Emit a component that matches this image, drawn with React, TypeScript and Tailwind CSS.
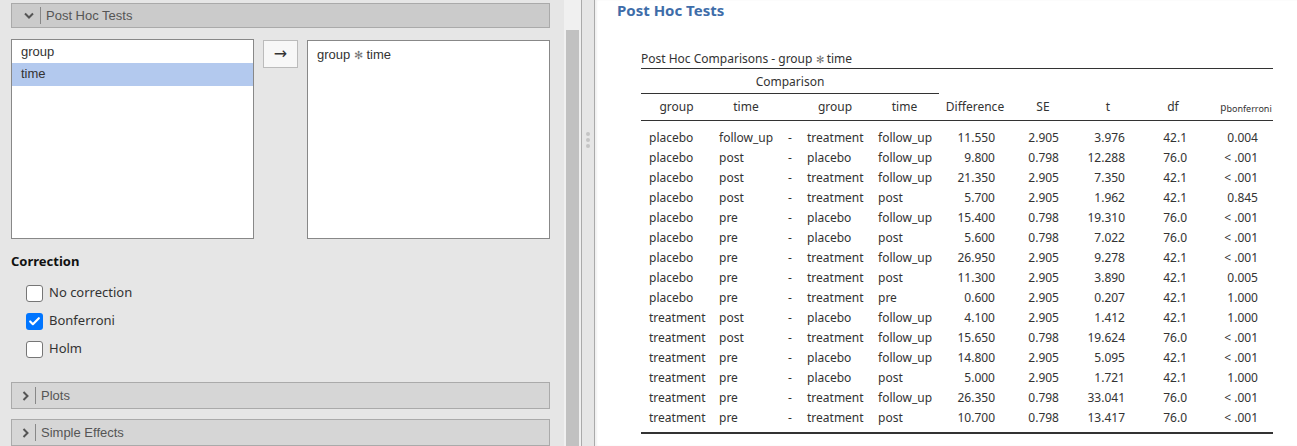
import { Check } from 'lucide-react'

const rows: string[][] = [
  ['placebo', 'follow_up', 'treatment', 'follow_up', '11.550', '2.905', '3.976', '42.1', '0.004'],
  ['placebo', 'post', 'placebo', 'follow_up', '9.800', '0.798', '12.288', '76.0', '< .001'],
  ['placebo', 'post', 'treatment', 'follow_up', '21.350', '2.905', '7.350', '42.1', '< .001'],
  ['placebo', 'post', 'treatment', 'post', '5.700', '2.905', '1.962', '42.1', '0.845'],
  ['placebo', 'pre', 'placebo', 'follow_up', '15.400', '0.798', '19.310', '76.0', '< .001'],
  ['placebo', 'pre', 'placebo', 'post', '5.600', '0.798', '7.022', '76.0', '< .001'],
  ['placebo', 'pre', 'treatment', 'follow_up', '26.950', '2.905', '9.278', '42.1', '< .001'],
  ['placebo', 'pre', 'treatment', 'post', '11.300', '2.905', '3.890', '42.1', '0.005'],
  ['placebo', 'pre', 'treatment', 'pre', '0.600', '2.905', '0.207', '42.1', '1.000'],
  ['treatment', 'post', 'placebo', 'follow_up', '4.100', '2.905', '1.412', '42.1', '1.000'],
  ['treatment', 'post', 'treatment', 'follow_up', '15.650', '0.798', '19.624', '76.0', '< .001'],
  ['treatment', 'pre', 'placebo', 'follow_up', '14.800', '2.905', '5.095', '42.1', '< .001'],
  ['treatment', 'pre', 'placebo', 'post', '5.000', '2.905', '1.721', '42.1', '1.000'],
  ['treatment', 'pre', 'treatment', 'follow_up', '26.350', '0.798', '33.041', '76.0', '< .001'],
  ['treatment', 'pre', 'treatment', 'post', '10.700', '0.798', '13.417', '76.0', '< .001'],
]

const gridCols = 'grid grid-cols-[71px_68px_20px_70px_69px_72px_64px_66px_64px_68px]'

function SectionHeader({ title, open }: { title: string; open?: boolean }) {
  return (
    <div
      className={`flex items-center h-[27px] w-[539px] border border-[#aaaaaa] ${
        open ? 'bg-[#cbcbcb]' : 'bg-[#d6d6d6]'
      }`}
    >
      <div className="w-[28px] flex justify-center pl-[6px]">
        {open ? (
          <svg width="10" height="7" viewBox="0 0 10 7">
            <path d="M1 1.5 L5 5.5 L9 1.5" stroke="#555" strokeWidth="2" fill="none" />
          </svg>
        ) : (
          <svg width="7" height="10" viewBox="0 0 7 10" className="-ml-[8px]">
            <path d="M1.5 1 L5.5 5 L1.5 9" stroke="#555" strokeWidth="2" fill="none" />
          </svg>
        )}
      </div>
      <div className={`h-[17px] w-px bg-[#888] ${open ? 'ml-[0px]' : '-ml-[5px]'}`} />
      <span className="ml-[5px] text-[13px] text-[#555] font-['Liberation_Sans',Arial,sans-serif]">
        {title}
      </span>
    </div>
  )
}

function CheckItem({ label, checked }: { label: string; checked?: boolean }) {
  return (
    <div className="flex items-center h-[28px] pl-[15px]">
      {checked ? (
        <div className="w-[17px] h-[17px] rounded-[3px] bg-[#0075ff] flex items-center justify-center">
          <Check size={13} color="white" strokeWidth={4} />
        </div>
      ) : (
        <div className="w-[17px] h-[17px] rounded-[3px] border border-[#767676] bg-white" />
      )}
      <span className="ml-[6px] text-[13px] text-[#333]">{label}</span>
    </div>
  )
}

// interaction symbol, kept as a text glyph
function Star({ className }: { className: string }) {
  return <span className={`font-['DejaVu_Sans',sans-serif] font-extralight text-[#777] ${className}`}>✻</span>
}

export default function App() {
  return (
    <div className="flex h-[446px] w-[1297px] overflow-hidden font-['Noto_Sans','Open_Sans',sans-serif]">
      {/* Options panel */}
      <div className="w-[564px] bg-[#e6e6e6] pl-[11px] pt-[3px] flex flex-col">
        <SectionHeader title="Post Hoc Tests" open />
        <div className="flex mt-[11px] font-['Liberation_Sans',Arial,sans-serif] text-[13px] text-[#333]">
          <div className="w-[243px] h-[200px] bg-white border border-[#888] pt-[1px]">
            <div className="h-[22px] flex items-center pl-[9px]">group</div>
            <div className="h-[23px] flex items-center pl-[9px] bg-[#b3c9ee]">time</div>
          </div>
          <div className="ml-[9px] mt-[1px] w-[35px] h-[28px] bg-[#f7f7f7] border border-[#bbb] flex items-center justify-center text-[16px] text-[#333] font-['DejaVu_Sans',sans-serif]">
            →
          </div>
          <div className="ml-[9px] mt-[1px] w-[243px] h-[199px] bg-white border border-[#888] pl-[9px] pt-[4px]">
            group <Star className="text-[11px]" /> time
          </div>
        </div>
        <div className="mt-[13px] text-[13px] font-bold text-[#111]">Correction</div>
        <div className="mt-[8px] flex flex-col">
          <CheckItem label="No correction" />
          <CheckItem label="Bonferroni" checked />
          <CheckItem label="Holm" />
        </div>
        <div className="mt-[19px] flex flex-col gap-[10px]">
          <SectionHeader title="Plots" />
          <SectionHeader title="Simple Effects" />
        </div>
      </div>

      {/* Scrollbar */}
      <div className="w-[17px] bg-[#f0f0f0] flex flex-col px-[2px]">
        <div className="h-[30px]" />
        <div className="flex-1 bg-[#c1c1c1]" />
      </div>

      {/* Splitter */}
      <div className="w-[14px] bg-[#e6e6e6] border-x border-[#aaa] flex flex-col items-center pt-[132px] gap-[2px]">
        <div className="w-[4px] h-[4px] rounded-full bg-[#c4c4c4]" />
        <div className="w-[4px] h-[4px] rounded-full bg-[#c4c4c4]" />
        <div className="w-[4px] h-[4px] rounded-full bg-[#c4c4c4]" />
      </div>

      {/* Results panel */}
      <div className="flex-1 bg-white shadow-[inset_2px_0_2px_rgba(0,0,0,0.06)] text-[#333]">
        <div className="pl-[22px] pt-[0px] h-[20px] text-[15px] leading-[20px] font-bold text-[#3e6da9]">
          Post Hoc Tests
        </div>
        <div className="ml-[46px] mt-[30px] w-[632px] text-[12px]">
          <div className="h-[18px] leading-[18px] pl-[0px]">
            Post Hoc Comparisons - group <Star className="text-[10px]" /> time
          </div>
          <div className="border-t border-[#333]">
            <div className={`${gridCols} h-[25px]`}>
              <div className="col-span-5 border-b border-[#333] flex items-center justify-center pt-[2px]">
                Comparison
              </div>
            </div>
            <div className={`${gridCols} h-[27px] border-b border-[#333] items-center text-center`}>
              <div>group</div>
              <div>time</div>
              <div />
              <div>group</div>
              <div>time</div>
              <div>Difference</div>
              <div>SE</div>
              <div>t</div>
              <div>df</div>
              <div className="pl-[14px] text-[10px]">
                p<span className="text-[9px] relative top-[1px]">bonferroni</span>
              </div>
            </div>
            <div className="pt-[7px] pb-[4px] border-b-2 border-[#333]">
              {rows.map((r, i) => (
                <div key={i} className={`${gridCols} h-[20px] items-center`}>
                  <div className="pl-[8px]">{r[0]}</div>
                  <div className="pl-[7px]">{r[1]}</div>
                  <div className="text-center">-</div>
                  <div className="pl-[7px]">{r[2]}</div>
                  <div className="pl-[8px]">{r[3]}</div>
                  <div className="text-right pr-[16px]">{r[4]}</div>
                  <div className="text-right pr-[16px]">{r[5]}</div>
                  <div className="text-right pr-[16px]">{r[6]}</div>
                  <div className="text-right pr-[18px]">{r[7]}</div>
                  <div className="text-right pr-[15px]">{r[8]}</div>
                </div>
              ))}
            </div>
          </div>
        </div>
      </div>
    </div>
  )
}
